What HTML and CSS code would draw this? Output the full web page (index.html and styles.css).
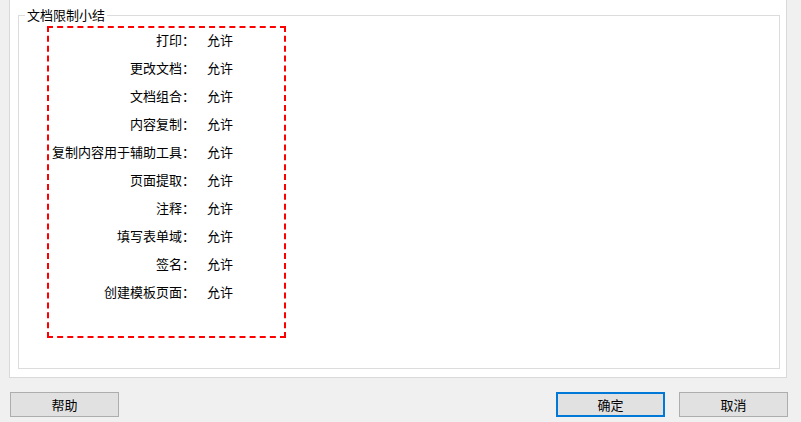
FILE: index.html
```html
<!DOCTYPE html>
<html lang="zh-CN">
<head>
<meta charset="utf-8">
<link rel="stylesheet" href="styles.css">
</head>
<body>
<div class="window">
  <div class="page">
    <div class="group">
      <span class="legend">文档限制小结</span>
      <div class="summary">
        <div class="row"><span class="label">打印：</span><span class="value">允许</span></div>
        <div class="row"><span class="label">更改文档：</span><span class="value">允许</span></div>
        <div class="row"><span class="label">文档组合：</span><span class="value">允许</span></div>
        <div class="row"><span class="label">内容复制：</span><span class="value">允许</span></div>
        <div class="row"><span class="label">复制内容用于辅助工具：</span><span class="value">允许</span></div>
        <div class="row"><span class="label">页面提取：</span><span class="value">允许</span></div>
        <div class="row"><span class="label">注释：</span><span class="value">允许</span></div>
        <div class="row"><span class="label">填写表单域：</span><span class="value">允许</span></div>
        <div class="row"><span class="label">签名：</span><span class="value">允许</span></div>
        <div class="row"><span class="label">创建模板页面：</span><span class="value">允许</span></div>
      </div>
    </div>
  </div>
  <div class="buttons">
    <button class="btn">帮助</button>
    <div class="spacer"></div>
    <button class="btn default">确定</button>
    <button class="btn">取消</button>
  </div>
</div>
</body>
</html>
```
FILE: styles.css
```css
* { box-sizing: border-box; }
html, body {
  margin: 0;
  padding: 0;
  background: #f0f0f0;
}
body {
  width: 801px;
  height: 422px;
  overflow: hidden;
  font-family: "Noto Sans CJK SC", "Noto Sans", sans-serif;
  font-size: 13px;
  color: #000;
}
.window {
  display: flex;
  flex-direction: column;
}
.page {
  margin-left: 9px;
  width: 778px;
  height: 378px;
  background: #fff;
  border: 1px solid #d9d9d9;
  border-top: none;
  padding: 15px 6px 8px 8px;
}
.group {
  position: relative;
  height: 100%;
  border: 1px solid #dcdcdc;
  padding: 10px 0 0 28px;
}
.legend {
  position: absolute;
  left: 6px;
  top: -9px;
  padding: 0 2px;
  background: #fff;
  line-height: 15px;
  white-space: nowrap;
}
.summary {
  width: 239px;
  height: 312px;
  border: 2px dashed #ff0000;
  display: flex;
  flex-direction: column;
  gap: 4px;
}
.row {
  display: flex;
  gap: 12px;
  line-height: 24px;
  height: 24px;
  white-space: nowrap;
}
.label {
  width: 146px;
  text-align: right;
}
.buttons {
  display: flex;
  margin-top: 14px;
  padding: 0 13px 0 10px;
  gap: 14px;
}
.spacer { flex: 1; }
.btn {
  width: 109px;
  height: 25px;
  padding: 0;
  margin: 0;
  background: #e1e1e1;
  border: 1px solid #adadad;
  font-family: "Noto Sans CJK SC", "Noto Sans", sans-serif;
  font-size: 13px;
  color: #000;
  line-height: 23px;
}
.btn.default {
  border: 2px solid #0078d7;
  line-height: 21px;
}
```
